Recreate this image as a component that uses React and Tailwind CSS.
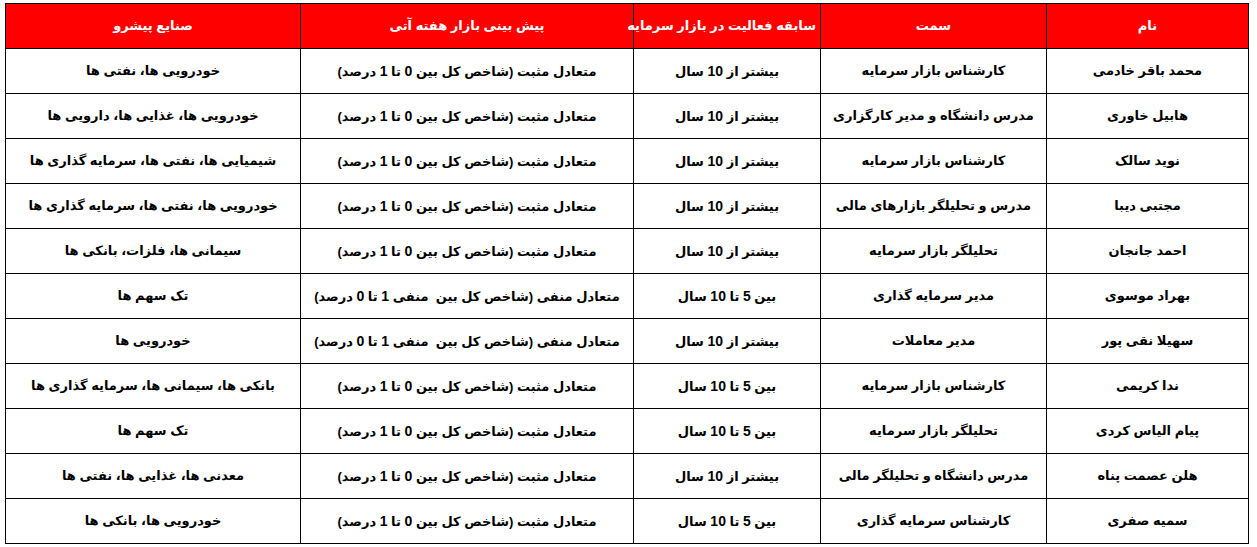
import React from "react";

const headers = ["نام", "سمت", "سابقه فعالیت در بازار سرمایه", "پیش بینی بازار هفته آتی", "صنایع پیشرو"];
const widths = ["w-[202px]", "w-[226px]", "w-[187px]", "w-[333px]", "w-[295px]"];

const POS = "متعادل مثبت (شاخص کل بین 0 تا 1 درصد)";
const NEG = "متعادل منفی (شاخص کل بین  منفی 1 تا 0 درصد)";
const MORE = "بیشتر از 10 سال";
const MID = "بین 5 تا 10 سال";

const rows = [
  ["محمد باقر خادمی", "کارشناس بازار سرمایه", MORE, POS, "خودرویی ها، نفتی ها"],
  ["هابیل خاوری", "مدرس دانشگاه و مدیر کارگزاری", MORE, POS, "خودرویی ها، غذایی ها، دارویی ها"],
  ["نوید سالک", "کارشناس بازار سرمایه", MORE, POS, "شیمیایی ها، نفتی ها، سرمایه گذاری ها"],
  ["مجتبی دیبا", "مدرس و تحلیلگر بازارهای مالی", MORE, POS, "خودرویی ها، نفتی ها، سرمایه گذاری ها"],
  ["احمد جانجان", "تحلیلگر بازار سرمایه", MORE, POS, "سیمانی ها، فلزات، بانکی ها"],
  ["بهراد موسوی", "مدیر سرمایه گذاری", MID, NEG, "تک سهم ها"],
  ["سهیلا نقی پور", "مدیر معاملات", MORE, NEG, "خودرویی ها"],
  ["ندا کریمی", "کارشناس بازار سرمایه", MID, POS, "بانکی ها، سیمانی ها، سرمایه گذاری ها"],
  ["پیام الیاس کردی", "تحلیلگر بازار سرمایه", MID, POS, "تک سهم ها"],
  ["هلن عصمت پناه", "مدرس دانشگاه و تحلیلگر مالی", MORE, POS, "معدنی ها، غذایی ها، نفتی ها"],
  ["سمیه صفری", "کارشناس سرمایه گذاری", MID, POS, "خودرویی ها، بانکی ها"],
];

function Cell({ text }) {
  const parts = text.split(/(\d+)/);
  return (
    <>
      {parts.map((p, i) =>
        /^\d+$/.test(p) ? (
          <span key={i} className="text-[14px]">
            {p}
          </span>
        ) : (
          <React.Fragment key={i}>{p}</React.Fragment>
        )
      )}
    </>
  );
}

export default function App() {
  return (
    <div
      className="w-[1257px] h-[547px] bg-white overflow-hidden pt-[3px] pl-[5px]"
      style={{ fontFamily: '"Liberation Sans", "DejaVu Sans", sans-serif' }}
    >
      <table dir="rtl" className="table-fixed border-collapse w-[1243px] font-bold text-[13px] text-black">
        <colgroup>
          {widths.map((w, i) => (
            <col key={i} className={w} />
          ))}
        </colgroup>
        <thead>
          <tr className="h-[45px] bg-[#ff0000] text-white">
            {headers.map((h, i) => (
              <th key={i} className="border border-black text-center font-bold px-1 whitespace-nowrap">
                {h}
              </th>
            ))}
          </tr>
        </thead>
        <tbody>
          {rows.map((r, ri) => (
            <tr key={ri} className="h-[45px]">
              {r.map((c, ci) => (
                <td key={ci} className="border border-black text-center px-1 whitespace-pre">
                  <Cell text={c} />
                </td>
              ))}
            </tr>
          ))}
        </tbody>
      </table>
    </div>
  );
}
